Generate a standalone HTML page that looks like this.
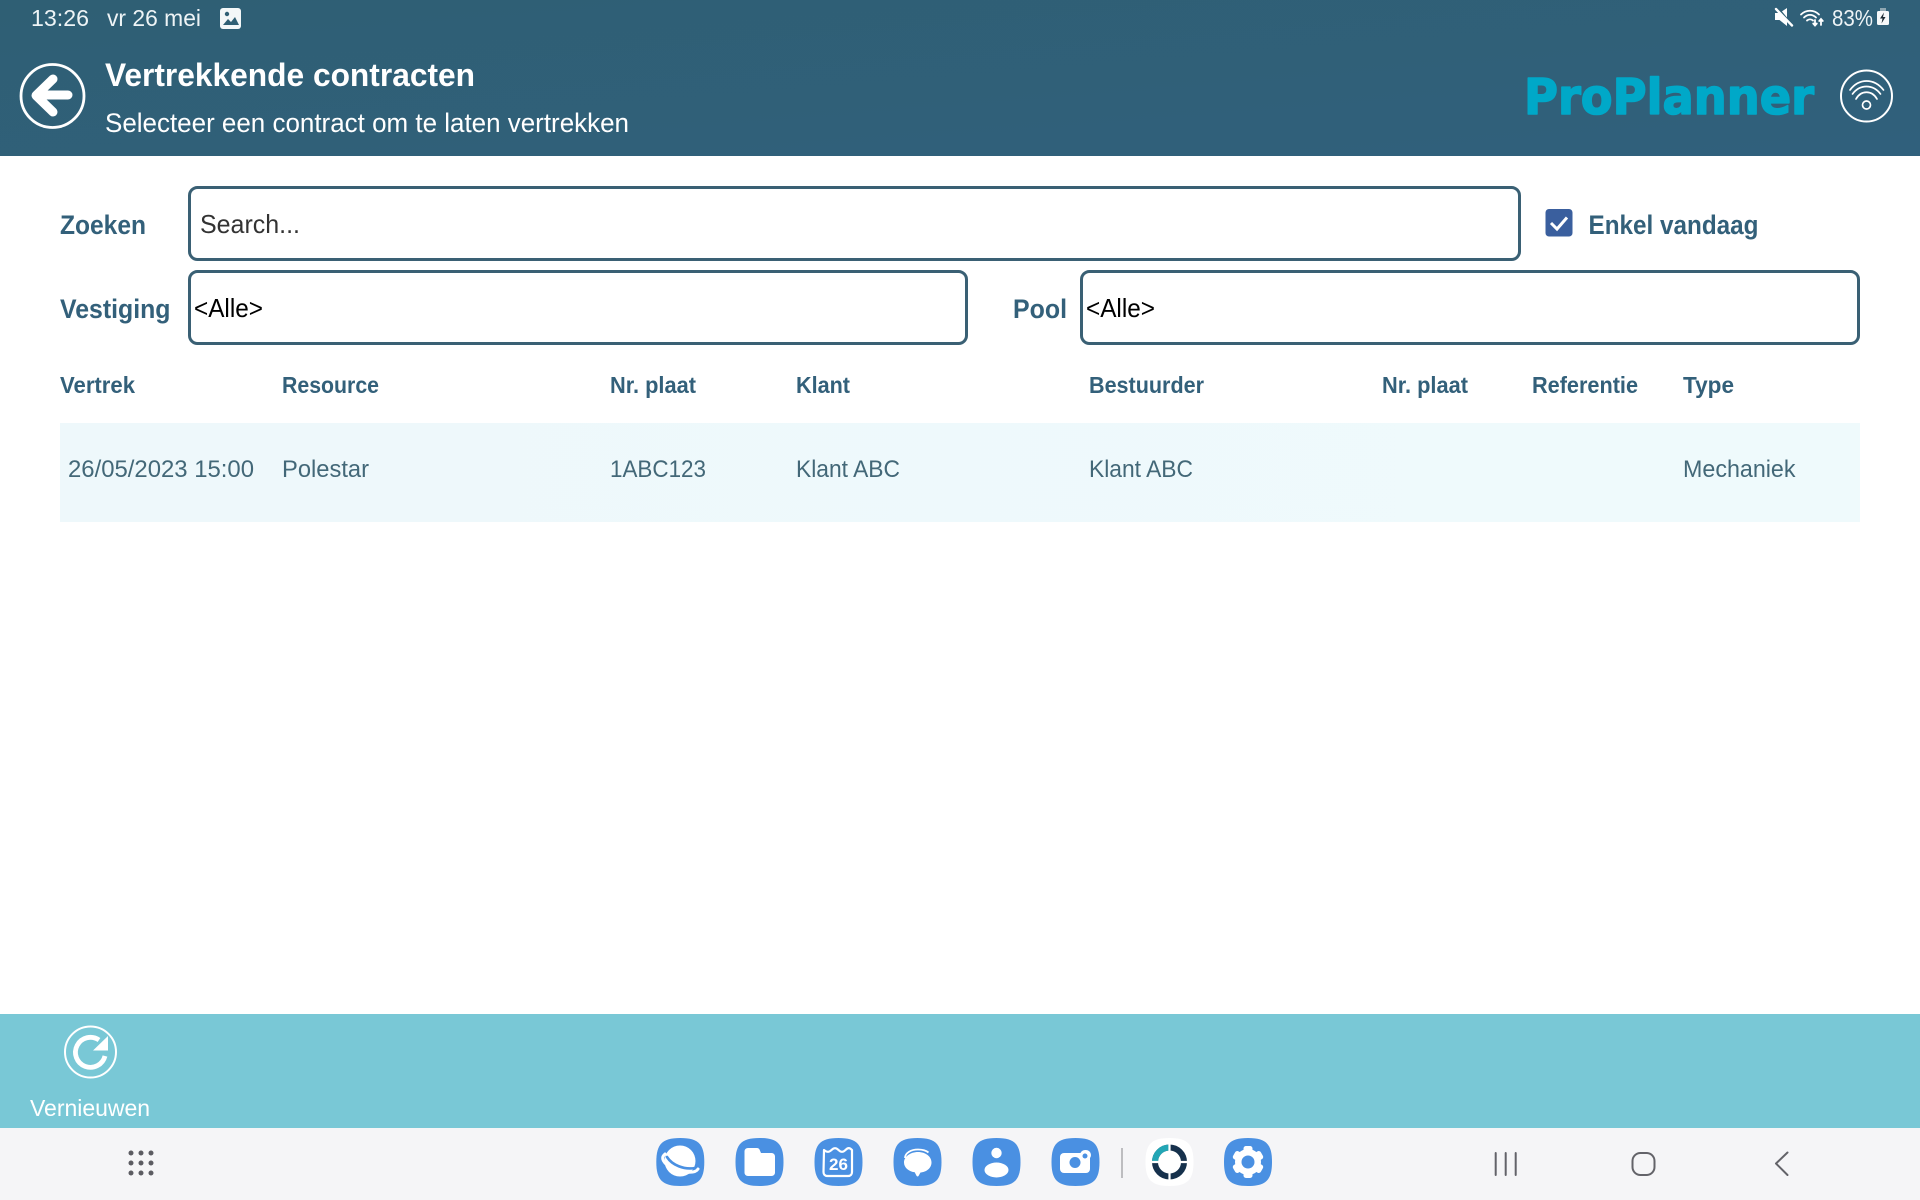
<!DOCTYPE html>
<html lang="nl">
<head>
<meta charset="utf-8">
<title>Vertrekkende contracten</title>
<style>
html,body{margin:0;padding:0;width:1920px;height:1200px;overflow:hidden;background:#fff}
svg{display:block}
text{font-family:"Liberation Sans",sans-serif}
.b{font-weight:700}
.lab{font-weight:700;font-size:27px;fill:#33607a}
.th{font-weight:700;font-size:23px;fill:#33607a}
.td{font-size:24px;fill:#436878}
.w{fill:#fff}
</style>
</head>
<body>
<svg width="1920" height="1200" viewBox="0 0 1920 1200" xmlns="http://www.w3.org/2000/svg">
<defs>
<linearGradient id="hd" x1="0" y1="0" x2="1" y2="1"><stop offset="0" stop-color="#2f5f74"/><stop offset="1" stop-color="#30607c"/></linearGradient>
<linearGradient id="rw" x1="0" y1="0" x2="1" y2="0"><stop offset="0" stop-color="#eef8fb"/><stop offset="1" stop-color="#effafc"/></linearGradient>
<path id="sq" d="M0-24C18-24 24-18 24 0S18 24 0 24-24 18-24 0-18-24 0-24Z"/>
</defs>
<rect width="1920" height="1200" fill="#fff"/>

<!-- header -->
<rect width="1920" height="156" fill="url(#hd)"/>
<text x="31" y="26" font-size="23" fill="#eef4f6" textLength="58" lengthAdjust="spacingAndGlyphs">13:26</text>
<text x="107" y="26" font-size="23" fill="#eef4f6" textLength="94" lengthAdjust="spacingAndGlyphs">vr 26 mei</text>
<rect x="220" y="8" width="21" height="21" rx="3" fill="#f3f7f8"/>
<circle cx="227" cy="14" r="2.2" fill="#2f5f74"/>
<path d="M223 25l5-6 3 3 4-5 4 8z" fill="#2f5f74"/>

<circle cx="52.500" cy="96" r="31.500" fill="none" stroke="#fff" stroke-width="2.800"/>
<path d="M68 95H37M53 79L36 95.500 53 112" fill="none" stroke="#fff" stroke-width="9" stroke-linecap="round" stroke-linejoin="round"/>

<text class="b w" x="105" y="86" font-size="32" textLength="370" lengthAdjust="spacingAndGlyphs">Vertrekkende contracten</text>
<text class="w" x="105" y="132" font-size="26.500" textLength="524" lengthAdjust="spacingAndGlyphs">Selecteer een contract om te laten vertrekken</text>

<!-- status right -->
<path d="M1775 13h4.500l7.500-5v18l-7.500-6h-4.500z" fill="#fff"/>
<path d="M1779 9l14 17" stroke="#2f5f74" stroke-width="1.500"/>
<path d="M1776 9l16 16.500" stroke="#fff" stroke-width="2.400" stroke-linecap="round"/>
<g fill="none" stroke="#fff" stroke-width="1.800" stroke-linecap="round">
<path d="M1801 14.500C1806 9.500 1814 9.500 1819 14.500"/>
<path d="M1804 17.500C1807.500 14 1812.500 14 1816 17.500"/>
<path d="M1807 20.500C1808.800 19 1811.200 19 1813 20.500"/>
<path d="M1815 20v5M1813.200 23.500l1.800 2 1.800-2"/>
<path d="M1821 25v-6M1819.200 21l1.800-2 1.800 2"/>
</g>
<text x="1832" y="26" font-size="23" fill="#eef4f6" textLength="41" lengthAdjust="spacingAndGlyphs">83%</text>
<rect x="1880" y="8" width="6" height="4" fill="#8fa7b2"/>
<rect x="1877" y="11" width="12" height="14" rx="1.500" fill="#f6f8f9"/>
<path d="M1884 12.500l-4 6h2.500l-1 5 4-6.500h-2.500z" fill="#1c2a33"/>

<text class="b" x="1524" y="114" style="font-family:'DejaVu Sans',sans-serif" font-size="49" fill="#00a8c8" stroke="#00a8c8" stroke-width="1.600" stroke-linejoin="round" textLength="290" lengthAdjust="spacingAndGlyphs">ProPlanner</text>
<circle cx="1866.500" cy="96" r="25.500" fill="none" stroke="#fff" stroke-width="2"/>
<g fill="none" stroke="#fff" stroke-width="1.700" stroke-linecap="round">
<path d="M1850 90C1859 78 1874 78 1883.500 90"/>
<path d="M1852.500 94C1860 84 1873 84 1880.500 94"/>
<path d="M1856 99C1861 90 1872 90 1877 99"/>
<circle cx="1866.500" cy="105" r="4"/>
</g>

<!-- filters -->
<text class="lab" x="60" y="234" textLength="86" lengthAdjust="spacingAndGlyphs">Zoeken</text>
<rect x="189.500" y="187.500" width="1330" height="72" rx="8" fill="#fff" stroke="#3a6074" stroke-width="3"/>
<text x="200" y="233" font-size="26" fill="#333" textLength="100" lengthAdjust="spacingAndGlyphs">Search...</text>
<rect x="1545.500" y="209" width="27" height="27.500" rx="3.500" fill="#3a5f9e"/>
<path d="M1551 223l6 6 10-11.500" fill="none" stroke="#fff" stroke-width="3"/>
<text class="lab" x="1588.500" y="234" textLength="170" lengthAdjust="spacingAndGlyphs">Enkel vandaag</text>

<text class="lab" x="60" y="318" textLength="110.500" lengthAdjust="spacingAndGlyphs">Vestiging</text>
<rect x="189.500" y="271.500" width="777" height="72" rx="8" fill="#fff" stroke="#3a6074" stroke-width="3"/>
<text x="194" y="317" font-size="26" fill="#000" textLength="69" lengthAdjust="spacingAndGlyphs">&lt;Alle&gt;</text>
<text class="lab" x="1013" y="318" textLength="54" lengthAdjust="spacingAndGlyphs">Pool</text>
<rect x="1081.500" y="271.500" width="777" height="72" rx="8" fill="#fff" stroke="#3a6074" stroke-width="3"/>
<text x="1086" y="317" font-size="26" fill="#000" textLength="69" lengthAdjust="spacingAndGlyphs">&lt;Alle&gt;</text>

<!-- table head -->
<text class="th" x="60" y="393" textLength="75" lengthAdjust="spacingAndGlyphs">Vertrek</text>
<text class="th" x="282" y="393" textLength="97" lengthAdjust="spacingAndGlyphs">Resource</text>
<text class="th" x="610" y="393" textLength="86" lengthAdjust="spacingAndGlyphs">Nr. plaat</text>
<text class="th" x="796" y="393" textLength="54" lengthAdjust="spacingAndGlyphs">Klant</text>
<text class="th" x="1089" y="393" textLength="115" lengthAdjust="spacingAndGlyphs">Bestuurder</text>
<text class="th" x="1382" y="393" textLength="86" lengthAdjust="spacingAndGlyphs">Nr. plaat</text>
<text class="th" x="1532" y="393" textLength="106" lengthAdjust="spacingAndGlyphs">Referentie</text>
<text class="th" x="1683" y="393" textLength="51" lengthAdjust="spacingAndGlyphs">Type</text>

<!-- row -->
<rect x="60" y="423" width="1800" height="99" fill="url(#rw)"/>
<text class="td" x="68" y="477" textLength="186" lengthAdjust="spacingAndGlyphs">26/05/2023 15:00</text>
<text class="td" x="282" y="477" textLength="87" lengthAdjust="spacingAndGlyphs">Polestar</text>
<text class="td" x="610" y="477" textLength="96" lengthAdjust="spacingAndGlyphs">1ABC123</text>
<text class="td" x="796" y="477" textLength="104" lengthAdjust="spacingAndGlyphs">Klant ABC</text>
<text class="td" x="1089" y="477" textLength="104" lengthAdjust="spacingAndGlyphs">Klant ABC</text>
<text class="td" x="1683" y="477" textLength="112.500" lengthAdjust="spacingAndGlyphs">Mechaniek</text>

<!-- bottom action bar -->
<rect y="1014" width="1920" height="114" fill="#79c8d6"/>
<circle cx="90.500" cy="1052" r="25.500" fill="none" stroke="#fff" stroke-width="2"/>
<path d="M105 1056A15 15 0 1 1 99 1040" fill="none" stroke="#fff" stroke-width="4.800"/>
<path d="M108 1036v14.500H93z" fill="#fff"/>
<text class="w" x="30" y="1116" font-size="23" textLength="120" lengthAdjust="spacing">Vernieuwen</text>

<!-- nav bar -->
<rect y="1128" width="1920" height="72" fill="#f5f5f7"/>
<g fill="#5c5c62">
<circle cx="131" cy="1153" r="2.500"/><circle cx="141" cy="1153" r="2.500"/><circle cx="151" cy="1153" r="2.500"/>
<circle cx="131" cy="1163" r="2.500"/><circle cx="141" cy="1163" r="2.500"/><circle cx="151" cy="1163" r="2.500"/>
<circle cx="131" cy="1173" r="2.500"/><circle cx="141" cy="1173" r="2.500"/><circle cx="151" cy="1173" r="2.500"/>
</g>

<g fill="#4a90e2">
<use href="#sq" x="680.300" y="1162"/>
<use href="#sq" x="759.500" y="1162"/>
<use href="#sq" x="838.500" y="1162"/>
<use href="#sq" x="917.500" y="1162"/>
<use href="#sq" x="996.500" y="1162"/>
<use href="#sq" x="1075.500" y="1162"/>
<use href="#sq" x="1248" y="1162"/>
</g>

<!-- planet -->
<circle cx="680" cy="1161" r="15.500" fill="#fff"/>
<path d="M665 1154C660 1158 664 1164 672 1168C683 1173 695 1174 698 1169" fill="none" stroke="#fff" stroke-width="3" stroke-linecap="round"/>
<path d="M667 1157C672 1165 684 1170 695 1168" fill="none" stroke="#4a90e2" stroke-width="2.600" stroke-linecap="round"/>

<!-- folder -->
<path d="M748 1148h9c1 0 2 .5 2.500 1.500l1.500 3.500h10.500c2 0 3.500 1.500 3.500 3.500v16c0 2-1.500 3.500-3.500 3.500h-23.500c-2 0-3.500-1.500-3.500-3.500v-21c0-2 1.500-3.500 3.500-3.500z" fill="#fff"/>

<!-- calendar -->
<path d="M824 1150c3 2.500 5 2.500 7.500 0s4.500-2.500 7 0 4.500 2.500 7 0 4-2.500 6.500 0v22c0 2.500-1.500 4-4 4h-20.500c-2.500 0-4-1.500-4-4z" fill="none" stroke="#fff" stroke-width="2.200" stroke-linejoin="round"/>
<text class="b w" x="838.500" y="1170" font-size="17" text-anchor="middle">26</text>

<!-- messages -->
<path d="M918 1152c7.500 0 13.500 4.500 13.500 10.500 0 5.500-5 9.500-11 10l-2 3.500c-.6.800-1.500.6-2-.2l-1.800-3.500c-6-.8-10.700-4.800-10.700-9.800 0-6 6.500-10.500 14-10.500z" fill="#fff"/>
<path d="M905 1158c0-5 6-8.500 13-8.500 4.500 0 8 1 10.500 3" fill="none" stroke="#fff" stroke-width="1.800"/>

<!-- contact -->
<circle cx="996.500" cy="1153" r="5.200" fill="#fff"/>
<ellipse cx="996.500" cy="1170" rx="12" ry="7.500" fill="#fff"/>

<!-- camera -->
<rect x="1060" y="1153" width="30" height="20" rx="4" fill="#fff"/>
<rect x="1080" y="1150" width="11" height="10" rx="5" fill="#fff"/>
<circle cx="1075" cy="1162.500" r="5.500" fill="#4a90e2"/>
<circle cx="1085" cy="1156" r="2.500" fill="#4a90e2"/>

<!-- divider -->
<rect x="1121" y="1148" width="2" height="30" fill="#bdbdc0"/>

<!-- ring app -->
<use href="#sq" x="1169.500" y="1162" fill="#fff"/>
<circle cx="1169.500" cy="1162" r="14.500" fill="none" stroke="#16314c" stroke-width="6"/>
<path d="M1155 1162A14.500 14.500 0 0 1 1169.500 1147.500" fill="none" stroke="#22a6b5" stroke-width="6"/>
<path d="M1169.500 1143v38M1150 1162h39" stroke="#fff" stroke-width="2.200"/>

<!-- gear -->
<g fill="#fff">
<circle cx="1248" cy="1162" r="13"/>
<rect x="1243.500" y="1146" width="9" height="32" rx="2.500"/>
<rect x="1243.500" y="1146" width="9" height="32" rx="2.500" transform="rotate(60 1248 1162)"/>
<rect x="1243.500" y="1146" width="9" height="32" rx="2.500" transform="rotate(120 1248 1162)"/>
</g>
<circle cx="1248" cy="1162" r="6.500" fill="#4a90e2"/>

<!-- android nav -->
<g fill="none" stroke="#636369" stroke-width="2" stroke-linecap="round" stroke-linejoin="round">
<path d="M1495.700 1153v22M1505.700 1153v22M1515.700 1153v22"/>
<rect x="1632.500" y="1153" width="22" height="22" rx="8"/>
<path d="M1787.500 1152.500L1776 1163.500l11.500 11.500"/>
</g>
</svg>
</body>
</html>
